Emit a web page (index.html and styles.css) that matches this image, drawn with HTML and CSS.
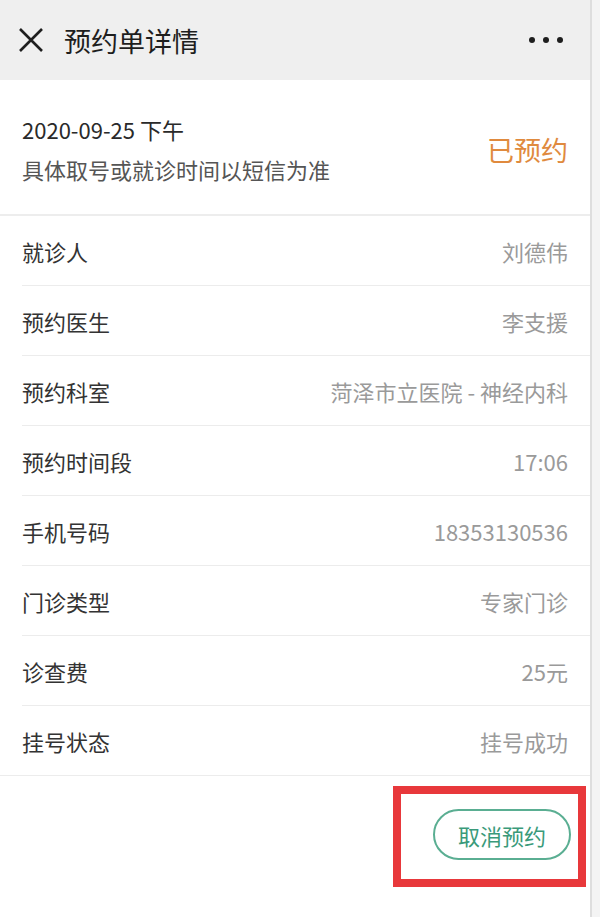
FILE: index.html
```html
<!DOCTYPE html>
<html lang="zh-CN">
<head>
<meta charset="UTF-8">
<meta name="viewport" content="width=device-width, initial-scale=1.0">
<title>预约单详情</title>
<link rel="stylesheet" href="styles.css">
</head>
<body>
    <div class="app">
        <div class="topbar">
            <svg class="close-icon" width="26" height="26" viewBox="0 0 26 26">
                <path d="M2 2 L24 24 M24 2 L2 24" stroke="#1e1e1e" stroke-width="2.6" fill="none"/>
            </svg>
            <div class="title">预约单详情</div>
            <div class="more">
                <span></span><span></span><span></span>
            </div>
        </div>

        <div class="summary">
            <div class="summary-text">
                <div class="date">2020-09-25 下午</div>
                <div class="note">具体取号或就诊时间以短信为准</div>
            </div>
            <div class="status">已预约</div>
        </div>

        <div class="info-list">
            <div class="info-row"><span class="label">就诊人</span><span class="value">刘德伟</span></div>
            <div class="info-row"><span class="label">预约医生</span><span class="value">李支援</span></div>
            <div class="info-row"><span class="label">预约科室</span><span class="value">菏泽市立医院 - 神经内科</span></div>
            <div class="info-row"><span class="label">预约时间段</span><span class="value">17:06</span></div>
            <div class="info-row"><span class="label">手机号码</span><span class="value">18353130536</span></div>
            <div class="info-row"><span class="label">门诊类型</span><span class="value">专家门诊</span></div>
            <div class="info-row"><span class="label">诊查费</span><span class="value">25元</span></div>
            <div class="info-row"><span class="label">挂号状态</span><span class="value">挂号成功</span></div>
        </div>

        <div class="footer">
            <!-- red annotation box around the button -->
            <div class="highlight">
                <button class="cancel-btn">取消预约</button>
            </div>
        </div>
    </div>
</body>
</html>
```

FILE: styles.css
```css
body, html {
    margin: 0;
    padding: 0;
    height: 100%;
    overflow: hidden;
}
body {
    background: #f4f4f4;
    font-family: "Noto Sans CJK SC", "Noto Sans", sans-serif;
}
.app {
    width: 590px;
    height: 917px;
    background: #fff;
    border-right: 2px solid #dedede;
}

/* Top bar */
.topbar {
    height: 80px;
    background: #efefef;
    display: flex;
    align-items: center;
    padding: 0 27px 0 18px;
    box-sizing: border-box;
}
.close-icon {
    flex: none;
}
.title {
    margin-left: 20px;
    font-size: 27px;
    color: #1e1e1e;
    flex: 1;
}
.more {
    display: flex;
    gap: 8px;
}
.more span {
    width: 6px;
    height: 6px;
    border-radius: 50%;
    background: #1e1e1e;
}

/* Summary */
.summary {
    height: 136px;
    display: flex;
    align-items: center;
    justify-content: space-between;
    padding: 4px 22px 0 22px;
    box-sizing: border-box;
    border-bottom: 2px solid #ededed;
}
.date {
    font-size: 22px;
    line-height: 40px;
    color: #2a2a2a;
}
.note {
    font-size: 22px;
    line-height: 40px;
    color: #555;
}
.status {
    font-size: 27px;
    color: #e08a3e;
}

/* Info rows */
.info-list {
    border-bottom: 1px solid #ececec;
}
.info-row {
    height: 69px;
    margin-left: 22px;
    padding-right: 22px;
    display: flex;
    align-items: center;
    justify-content: space-between;
    border-bottom: 1px solid #ececec;
    font-size: 22px;
}
.info-row:last-child {
    border-bottom: none;
}
.label {
    color: #333;
}
.value {
    color: #9a9a9a;
}

/* Footer */
.footer {
    display: flex;
    justify-content: flex-end;
    padding: 10px 4px 0 0;
}
.highlight {
    border: 8px solid #e8383b;
    padding: 15px 7px 19px 32px;
}
.cancel-btn {
    width: 138px;
    height: 51px;
    border: 2px solid #5aae92;
    border-radius: 26px;
    background: #fff;
    color: #3a9a7a;
    font-family: "Noto Sans CJK SC", sans-serif;
    font-size: 22px;
    padding: 0;
}
```
